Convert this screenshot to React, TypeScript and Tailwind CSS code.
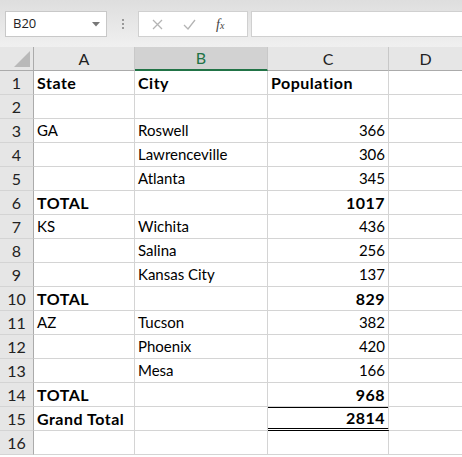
import React from "react";

type Cell = { t?: string; b?: boolean; r?: boolean };
type Row = [Cell, Cell, Cell, Cell];

const e: Cell = {};
const rows: Row[] = [
  [{ t: "State", b: true }, { t: "City", b: true }, { t: "Population", b: true }, e],
  [e, e, e, e],
  [{ t: "GA" }, { t: "Roswell" }, { t: "366", r: true }, e],
  [e, { t: "Lawrenceville" }, { t: "306", r: true }, e],
  [e, { t: "Atlanta" }, { t: "345", r: true }, e],
  [{ t: "TOTAL", b: true }, e, { t: "1017", r: true, b: true }, e],
  [{ t: "KS" }, { t: "Wichita" }, { t: "436", r: true }, e],
  [e, { t: "Salina" }, { t: "256", r: true }, e],
  [e, { t: "Kansas City" }, { t: "137", r: true }, e],
  [{ t: "TOTAL", b: true }, e, { t: "829", r: true, b: true }, e],
  [{ t: "AZ" }, { t: "Tucson" }, { t: "382", r: true }, e],
  [e, { t: "Phoenix" }, { t: "420", r: true }, e],
  [e, { t: "Mesa" }, { t: "166", r: true }, e],
  [{ t: "TOTAL", b: true }, e, { t: "968", r: true, b: true }, e],
  [{ t: "Grand Total", b: true }, e, { t: "2814", r: true, b: true }, e],
  [e, e, e, e],
];

const font = { fontFamily: "Lato, 'Open Sans', sans-serif" };

export default function App() {
  return (
    <div className="w-[462px] h-[457px] overflow-hidden bg-white" style={font}>
      {/* formula bar */}
      <div className="h-[47px] bg-[#ececec] bg-gradient-to-b from-[#dedede] to-[#f0f0f0] flex items-start pt-[11px] pl-[5px]">
        <div className="w-[102px] h-[26px] bg-white border border-[#c8c8c8] flex items-center pl-[7px] pr-[6px] justify-between">
          <span className="text-[13px] text-[#222]" style={{ fontFamily: "'Open Sans', sans-serif" }}>B20</span>
          <svg width="8" height="5" viewBox="0 0 8 5"><path d="M0 0 H8 L4 4.5 Z" fill="#777" /></svg>
        </div>
        <div className="w-[31px] h-[26px] flex flex-col items-center justify-center gap-[2px]">
          <span className="w-[2px] h-[2px] bg-[#999]" />
          <span className="w-[2px] h-[2px] bg-[#999]" />
          <span className="w-[2px] h-[2px] bg-[#999]" />
        </div>
        <div className="w-[110px] h-[26px] bg-white border border-[#d0d0d0] flex items-center">
          <svg className="ml-[13px]" width="11" height="11" viewBox="0 0 11 11"><path d="M1 1 L10 10 M10 1 L1 10" stroke="#b4b4b4" strokeWidth="1.3" /></svg>
          <svg className="ml-[20px]" width="13" height="11" viewBox="0 0 13 11"><path d="M1 6 L5 10 L12 1" stroke="#b4b4b4" strokeWidth="1.3" fill="none" /></svg>
          <span className="ml-[20px] text-[14px] italic text-[#444]" style={{ fontFamily: "'Liberation Serif', serif" }}>f<span className="text-[10px]">x</span></span>
        </div>
        <div className="ml-[3px] flex-1 h-[26px] bg-white border border-[#d0d0d0] border-r-0" />
      </div>
      {/* grid */}
      <div className="grid grid-cols-[34px_101px_133px_121px_1fr]">
        {/* header row */}
        <div className="h-[24px] bg-[#e6e6e6] border-r border-b border-[#ababab] relative">
          <svg className="absolute right-[3px] bottom-[3px]" width="16" height="16" viewBox="0 0 16 16"><path d="M16 0 V16 H0 Z" fill="#b9b9b9" /></svg>
        </div>
        <div className="h-[24px] bg-[#e6e6e6] border-r border-[#c8c8c8] border-b border-b-[#ababab] flex items-center justify-center text-[16px] text-[#222]">A</div>
        <div className="h-[24px] bg-[#d2d2d2] border-r border-[#c8c8c8] border-b-2 border-b-[#217346] flex items-center justify-center text-[16px] text-[#217346]">B</div>
        <div className="h-[24px] bg-[#e6e6e6] border-r border-[#c8c8c8] border-b border-b-[#ababab] flex items-center justify-center text-[16px] text-[#222]">C</div>
        <div className="h-[24px] bg-[#e6e6e6] border-b border-[#ababab] flex items-center justify-center text-[16px] text-[#222]">D</div>
        {rows.map((row, i) => (
          <React.Fragment key={i}>
            <div className="h-[24px] bg-[#e6e6e6] border-r border-[#ababab] border-b border-b-[#d4d4d4] flex items-center justify-center text-[16px] text-[#222]">
              {i + 1}
            </div>
            {row.map((c, j) => {
              const dbl = j === 2 && i === 14;
              return (
                <div
                  key={j}
                  className={
                    "h-[24px] flex items-center px-[3px] text-black border-r border-[#d4d4d4] " +
                    (dbl ? "border-b-[3px] border-b-black border-double shadow-[inset_0_1px_0_#000] " : "border-b ") +
                    (c.r ? "justify-end " : "") +
                    (c.b ? "font-bold text-[16px] tracking-[0.5px] " : "text-[15px] ") +
                    (j === 3 ? "border-r-0 " : "")
                  }
                  style={dbl ? { borderRightStyle: "solid" } : undefined}
                >
                  {c.t}
                </div>
              );
            })}
          </React.Fragment>
        ))}
      </div>
    </div>
  );
}
